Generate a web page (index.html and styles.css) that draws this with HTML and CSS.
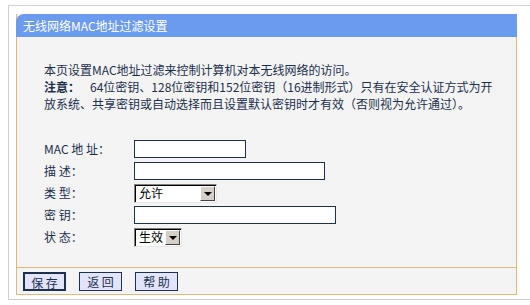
FILE: index.html
```html
<!DOCTYPE html>
<html>
  <head>
    <meta charset="utf-8" />
    <title>无线网络MAC地址过滤设置</title>
    <link rel="stylesheet" href="styles.css">
  </head>
  <body>
    <div class="frame">
      <div class="panel">
        <div class="panelTitle">无线网络MAC地址过滤设置</div>
        <div class="panelBody">
          <p class="intro">本页设置MAC地址过滤来控制计算机对本无线网络的访问。</p>
          <p class="intro"><b class="noteTag">注意：</b>64位密钥、128位密钥和152位密钥（16进制形式）只有在安全认证方式为开放系统、共享密钥或自动选择而且设置默认密钥时才有效（否则视为允许通过）。</p>

          <div class="formGrid">
            <label class="fieldLabel" for="macAddr">MAC 地 址：</label>
            <input class="textBox macBox" id="macAddr" type="text">

            <label class="fieldLabel" for="desc">描 述：</label>
            <input class="textBox descBox" id="desc" type="text">

            <span class="fieldLabel">类 型：</span>
            <span class="winSelect typeSelect">
              <span class="winSelectValue">允许</span>
              <span class="winSelectArrow"></span>
            </span>

            <label class="fieldLabel" for="wepKey">密 钥：</label>
            <input class="textBox keyBox" id="wepKey" type="text">

            <span class="fieldLabel">状 态：</span>
            <span class="winSelect stateSelect">
              <span class="winSelectValue">生效</span>
              <span class="winSelectArrow"></span>
            </span>
          </div>
        </div>
        <div class="buttonRow">
          <button class="pageButton defaultButton">保 存</button>
          <button class="pageButton">返 回</button>
          <button class="pageButton">帮 助</button>
        </div>
      </div>
    </div>
  </body>
</html>
```
FILE: styles.css
```css
body {
  margin: 0;
  background-color: #ffffff;
  font-family: "Noto Sans CJK SC", "DejaVu Sans", sans-serif;
  font-size: 12px;
  color: #1b2f4e;
}

.frame {
  margin: 5px 0 0 8px;
  width: 515px;
  border-top: 1px solid #d0d0d0;
  border-left: 1px solid #d0d0d0;
  border-bottom: 1px solid #d0d0d0;
  padding: 8px 0 4px 7px;
}

.panel {
  width: 499px;
  border: 1px solid #e2b77c;
  border-top: none;
  background-color: #f4f4f4;
}

.panelTitle {
  height: 23px;
  line-height: 23px;
  margin: 0 -1px;
  padding-left: 7px;
  background-color: #6b9bef;
  color: #ffffff;
  border-top-left-radius: 8px;
}

.panelBody {
  padding: 24px 20px 19px 27px;
}

.intro {
  margin: 0;
  line-height: 17px;
}

.noteTag {
  display: inline-block;
  font-weight: bold;
  margin-right: 10px;
}

.formGrid {
  display: grid;
  grid-template-columns: 90px auto;
  grid-auto-rows: 22px;
  align-items: center;
  justify-items: start;
  margin-top: 26px;
}

.fieldLabel {
  line-height: 18px;
}

.textBox {
  box-sizing: border-box;
  height: 18px;
  margin: 0;
  padding: 0 2px;
  border: 1px solid #1c3050;
  background-color: #ffffff;
  font: inherit;
}

.macBox {
  width: 112px;
}

.descBox {
  width: 191px;
}

.keyBox {
  width: 202px;
}

.winSelect {
  box-sizing: border-box;
  display: flex;
  align-items: center;
  height: 19px;
  border-top: 1px solid #808080;
  border-left: 1px solid #808080;
  border-right: 1px solid #e6e6e6;
  border-bottom: 1px solid #e6e6e6;
  box-shadow: inset 1px 1px 0 #000000;
  background-color: #ffffff;
  color: #000000;
}

.typeSelect {
  width: 83px;
}

.stateSelect {
  width: 48px;
}

.winSelectValue {
  flex: 1;
  padding-left: 4px;
  line-height: 16px;
}

.winSelectArrow {
  box-sizing: border-box;
  width: 15px;
  height: 15px;
  margin: 1px 1px 0 0;
  background-color: #d4d0c8;
  border-top: 1px solid #ffffff;
  border-left: 1px solid #ffffff;
  border-right: 1px solid #404040;
  border-bottom: 1px solid #404040;
  display: flex;
  justify-content: center;
  align-items: center;
}

.winSelectArrow::after {
  content: "";
  border-left: 4px solid transparent;
  border-right: 4px solid transparent;
  border-top: 4px solid #000000;
  margin-top: 1px;
}

.buttonRow {
  display: flex;
  gap: 13px;
  height: 26px;
  align-items: center;
  padding-left: 6px;
  border-top: 1px solid #e2b77c;
}

.pageButton {
  box-sizing: border-box;
  width: 43px;
  height: 19px;
  padding: 0;
  border: 1px solid #1c3050;
  background-color: #e2e4fb;
  color: #1b2f4e;
  font: inherit;
  line-height: 17px;
}

.defaultButton {
  border-width: 2px;
}
```
